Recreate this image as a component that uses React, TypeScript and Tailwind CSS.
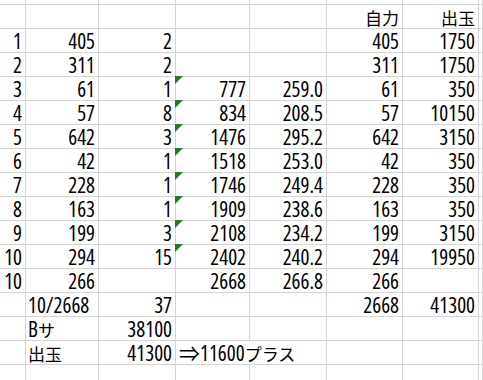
import React from "react";

type Cell = {
  v?: string;
  left?: boolean;
  flag?: boolean; // green error-indicator triangle
  span?: boolean; // text spills over into the next column
};

const n = (v: string, flag = false): Cell => ({ v, flag });
const l = (v: string): Cell => ({ v, left: true });
const e: Cell = {};

// columns A..H, each row here is one sheet row
const rows: Cell[][] = [
  [e, e, e, e, e, e, e, e],
  [e, e, e, e, e, { v: "自力" }, { v: "出玉" }, e],
  [n("1"), n("405"), n("2"), e, e, n("405"), n("1750"), e],
  [n("2"), n("311"), n("2"), e, e, n("311"), n("1750"), e],
  [n("3"), n("61"), n("1"), n("777", true), n("259.0"), n("61"), n("350"), e],
  [n("4"), n("57"), n("8"), n("834", true), n("208.5"), n("57"), n("10150"), e],
  [n("5"), n("642"), n("3"), n("1476", true), n("295.2"), n("642"), n("3150"), e],
  [n("6"), n("42"), n("1"), n("1518", true), n("253.0"), n("42"), n("350"), e],
  [n("7"), n("228"), n("1"), n("1746", true), n("249.4"), n("228"), n("350"), e],
  [n("8"), n("163"), n("1"), n("1909", true), n("238.6"), n("163"), n("350"), e],
  [n("9"), n("199"), n("3"), n("2108", true), n("234.2"), n("199"), n("3150"), e],
  [n("10"), n("294"), n("15"), n("2402", true), n("240.2"), n("294"), n("19950"), e],
  [n("10"), n("266"), e, n("2668"), n("266.8"), n("266"), e, e],
  [e, l("10/2668"), n("37"), e, e, n("2668"), n("41300"), e],
  [e, l("Bサ"), n("38100"), e, e, e, e, e],
  [e, l("出玉"), n("41300"), { v: "⇒11600プラス", left: true, span: true }, e, e, e],
  [e, e, e, e, e, e, e, e],
];

// wrap kana / kanji runs in a smaller span, digits stay condensed
const Text = ({ v }: { v: string }) => {
  const parts = v.split(/([\u3000-\u9fff\uff00-\uffef]+)/).filter(Boolean);
  return (
    <>
      {parts.map((p, i) =>
        /[\u3000-\u9fff\uff00-\uffef]/.test(p) ? (
          <span key={i} className="inline-block text-[17px] leading-[19px] font-['Noto_Sans_CJK_JP',sans-serif]">
            {p}
          </span>
        ) : (
          <span key={i} className="inline-block leading-[21px]">
            {p}
          </span>
        ),
      )}
    </>
  );
};

const rowHeight = (i: number) =>
  i === 0 ? "h-[5px]" : i === rows.length - 1 ? "h-[16px]" : "h-[24px]";

export default function App() {
  return (
    <div className="h-[380px] w-[483px] overflow-hidden bg-white text-black">
      <div className="grid grid-cols-[26px_73px_77px_74px_77px_76px_76px_1fr] font-['Open_Sans','Noto_Sans_CJK_JP',sans-serif] text-[21px] leading-[21px] font-stretch-condensed">
        {rows.map((row, ri) =>
          row.map((c, ci) => {
            if (ri === 15 && ci === 7) return null;
            return (
              <div
                key={`${ri}-${ci}`}
                className={`relative flex items-end whitespace-nowrap border-b border-r border-[#d4d4d4] ${rowHeight(ri)} ${
                  c.span ? "col-span-2 pl-[3px]" : c.left ? "justify-start pl-[2px]" : "justify-end pr-[3px]"
                }`}
              >
                {c.flag && (
                  <span className="absolute -left-px -top-px h-0 w-0 border-t-[8px] border-r-[8px] border-t-[#1e7b1e] border-r-transparent" />
                )}
                {c.v && (
                  <div className="leading-[21px]">
                    <Text v={c.v} />
                  </div>
                )}
              </div>
            );
          }),
        )}
      </div>
    </div>
  );
}
